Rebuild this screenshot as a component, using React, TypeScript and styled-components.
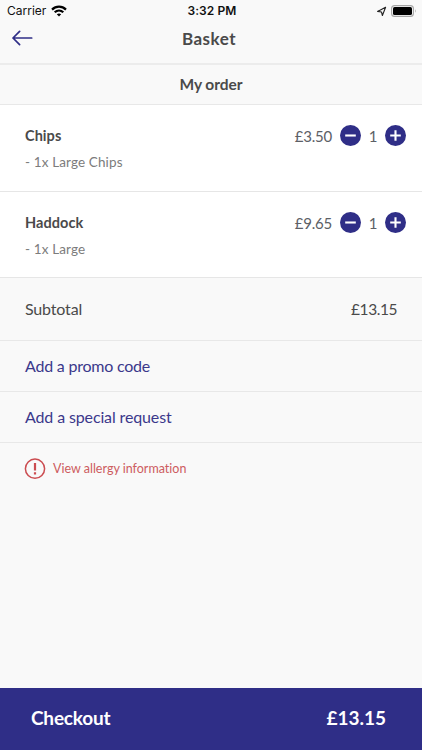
import React from "react";
import styled, { createGlobalStyle } from "styled-components";

const GlobalStyle = createGlobalStyle`
  * { box-sizing: border-box; }
  html, body, #root { height: 100%; margin: 0; }
  body {
    background: #f9f9f9;
    font-family: Lato, "Noto Sans", sans-serif;
    font-variant-ligatures: none;
  }
`;

const Screen = styled.div`
  width: 100%;
  height: 100vh;
  min-height: 750px;
  display: flex;
  flex-direction: column;
  background: #f9f9f9;
  color: #4a4a4a;
`;

const Text = styled.span<{ $size: number; $spacing?: number; $weight?: number; $color?: string }>`
  font-size: ${(p) => p.$size}px;
  line-height: 22px;
  font-weight: ${(p) => p.$weight ?? 400};
  letter-spacing: ${(p) => p.$spacing ?? 0}px;
  color: ${(p) => p.$color ?? "inherit"};
  white-space: nowrap;
`;

const StatusBar = styled.div`
  height: 22px;
  display: grid;
  grid-template-columns: 1fr auto 1fr;
  align-items: center;
  padding: 0 5px 0 7px;
  color: #111;
  font-family: Inter, sans-serif;
`;

const StatusGroup = styled.div<{ $end?: boolean }>`
  display: flex;
  align-items: center;
  gap: ${(p) => (p.$end ? 4 : 5)}px;
  justify-content: ${(p) => (p.$end ? "flex-end" : "flex-start")};
`;

const NavBar = styled.header`
  height: 43px;
  display: grid;
  grid-template-columns: 44px 1fr 44px;
  padding-bottom: 8px;
  align-items: center;
  border-bottom: 2px solid #ececec;
`;

const BackButton = styled.button`
  display: flex;
  padding: 0 0 1px 12px;
  border: 0;
  background: none;
`;

const Title = styled.h1`
  margin: 0;
  padding: 0 4px 0 0;
  text-align: center;
  line-height: 0;
`;

const SectionHeading = styled.h2`
  height: 40px;
  margin: 0;
  padding-bottom: 2px;
  display: flex;
  align-items: center;
  justify-content: center;
  border-bottom: 1px solid #e8e8e8;
`;

const Item = styled.section<{ $height: number }>`
  height: ${(p) => p.$height}px;
  display: flex;
  justify-content: space-between;
  padding: 20px 16px 0 25px;
  background: #fff;
  border-bottom: 1px solid #e6e6e6;
`;

const ItemInfo = styled.div`
  display: flex;
  flex-direction: column;
  gap: 4px;
`;

const Quantity = styled.div`
  height: 21px;
  display: flex;
  align-items: center;
`;

const Count = styled.div`
  width: 24px;
  text-align: center;
`;

const RoundButton = styled.button<{ $gap?: boolean }>`
  width: 21px;
  height: 21px;
  margin-left: ${(p) => (p.$gap ? 8 : 0)}px;
  padding: 0;
  border: 0;
  border-radius: 50%;
  background: #2f2e87;
  display: flex;
`;

const Row = styled.div<{ $height: number }>`
  height: ${(p) => p.$height}px;
  display: flex;
  align-items: center;
  justify-content: space-between;
  padding: 0 25px 1px;
  border-bottom: 1px solid #e8e8e8;
`;

const Allergy = styled.div`
  display: flex;
  align-items: center;
  gap: 7px;
  padding: 15px 24px;
`;

const Checkout = styled.footer`
  height: 62px;
  margin-top: auto;
  display: flex;
  align-items: center;
  justify-content: space-between;
  padding: 0 36px 2px 31px;
  background: #2f2e87;
  color: #fff;
`;

const items = [
  { name: "Chips", detail: "- 1x Large Chips", price: "£3.50", height: 87 },
  { name: "Haddock", detail: "- 1x Large", price: "£9.65", height: 86 },
];

const WifiIcon = () => (
  <svg width="16" height="12" viewBox="0 0 16 12" fill="none" stroke="#000" strokeWidth="2.2">
    <path d="M1 4.6C5 .7 11 .7 15 4.6" />
    <path d="M3.7 7.3c2.5-2.4 6.1-2.4 8.6 0" />
    <path d="M8 11.6 5.8 9.3q2.2-1.8 4.4 0Z" fill="#000" stroke="none" />
  </svg>
);

const LocationIcon = () => (
  <svg width="11" height="11" viewBox="0 0 11 11" fill="none" stroke="#222" strokeWidth="1.1" strokeLinejoin="round">
    <path d="M9.6 1.2 1.6 5.4l3.9.6.9 3.5Z" />
  </svg>
);

const BatteryIcon = () => (
  <svg width="26" height="12" viewBox="0 0 26 12">
    <rect x=".6" y=".6" width="21.8" height="10.8" rx="3" fill="none" stroke="#a5a5a5" strokeWidth="1.1" />
    <rect x="2" y="2" width="19" height="8" rx="1.6" fill="#000" />
    <path d="M24 4.2q1.4 1.8 0 3.6Z" fill="#999" />
  </svg>
);

const BackIcon = () => (
  <svg width="21" height="16" viewBox="0 0 21 16" fill="none" stroke="#2f2e87" strokeWidth="1.7" strokeLinecap="round" strokeLinejoin="round">
    <path d="M19.7 8H1M7.6 1.4 1 8l6.6 6.6" />
  </svg>
);

const SignIcon = ({ plus }: { plus?: boolean }) => (
  <svg width="21" height="21" viewBox="0 0 21 21" stroke="#fff" strokeWidth="2.1">
    <path d={plus ? "M5.2 10.5h10.6M10.5 5.2v10.6" : "M5.2 10.5h10.6"} />
  </svg>
);

const AlertIcon = () => (
  <svg width="22" height="22" viewBox="0 0 22 22" fill="none" stroke="#cb4c50">
    <circle cx="11" cy="10.7" r="9.6" strokeWidth="1.5" />
    <path d="M11 5v7.4M11 14.2v2.2" strokeWidth="2.2" />
  </svg>
);

export default function App() {
  return (
    <Screen>
      <GlobalStyle />
      <StatusBar>
        <StatusGroup>
          <Text $size={12}>Carrier</Text>
          <WifiIcon />
        </StatusGroup>
        <Text $size={12} $weight={600} $spacing={0.1}>3:32 PM</Text>
        <StatusGroup $end>
          <LocationIcon />
          <BatteryIcon />
        </StatusGroup>
      </StatusBar>
      <NavBar>
        <BackButton aria-label="Back"><BackIcon /></BackButton>
        <Title><Text $size={17} $weight={700} $spacing={0.5}>Basket</Text></Title>
      </NavBar>
      <SectionHeading><Text $size={15.5} $weight={700} $spacing={-0.03}>My order</Text></SectionHeading>
      {items.map((item) => (
        <Item key={item.name} $height={item.height}>
          <ItemInfo>
            <Text $size={14.5} $weight={700} $spacing={0.05}>{item.name}</Text>
            <Text $size={13.5} $spacing={0.13} $color="#7c7c7c">{item.detail}</Text>
          </ItemInfo>
          <Quantity>
            <Text $size={15} $spacing={-0.2} $color="#5c6066">{item.price}</Text>
            <RoundButton $gap aria-label="Remove one"><SignIcon /></RoundButton>
            <Count><Text $size={15} $color="#5c6066">1</Text></Count>
            <RoundButton aria-label="Add one"><SignIcon plus /></RoundButton>
          </Quantity>
        </Item>
      ))}
      <Row $height={63}>
        <Text $size={16} $spacing={-0.17}>Subtotal</Text>
        <Text $size={15.5} $spacing={-0.45}>£13.15</Text>
      </Row>
      <Row $height={51}><Text $size={16} $spacing={-0.22} $color="#3b388b">Add a promo code</Text></Row>
      <Row $height={51}><Text $size={16} $spacing={-0.13} $color="#3b388b">Add a special request</Text></Row>
      <Allergy>
        <AlertIcon />
        <Text $size={12.5} $color="#cd5c60">View allergy information</Text>
      </Allergy>
      <Checkout>
        <Text $size={19} $weight={700} $spacing={-0.2}>Checkout</Text>
        <Text $size={19} $weight={700}>£13.15</Text>
      </Checkout>
    </Screen>
  );
}
